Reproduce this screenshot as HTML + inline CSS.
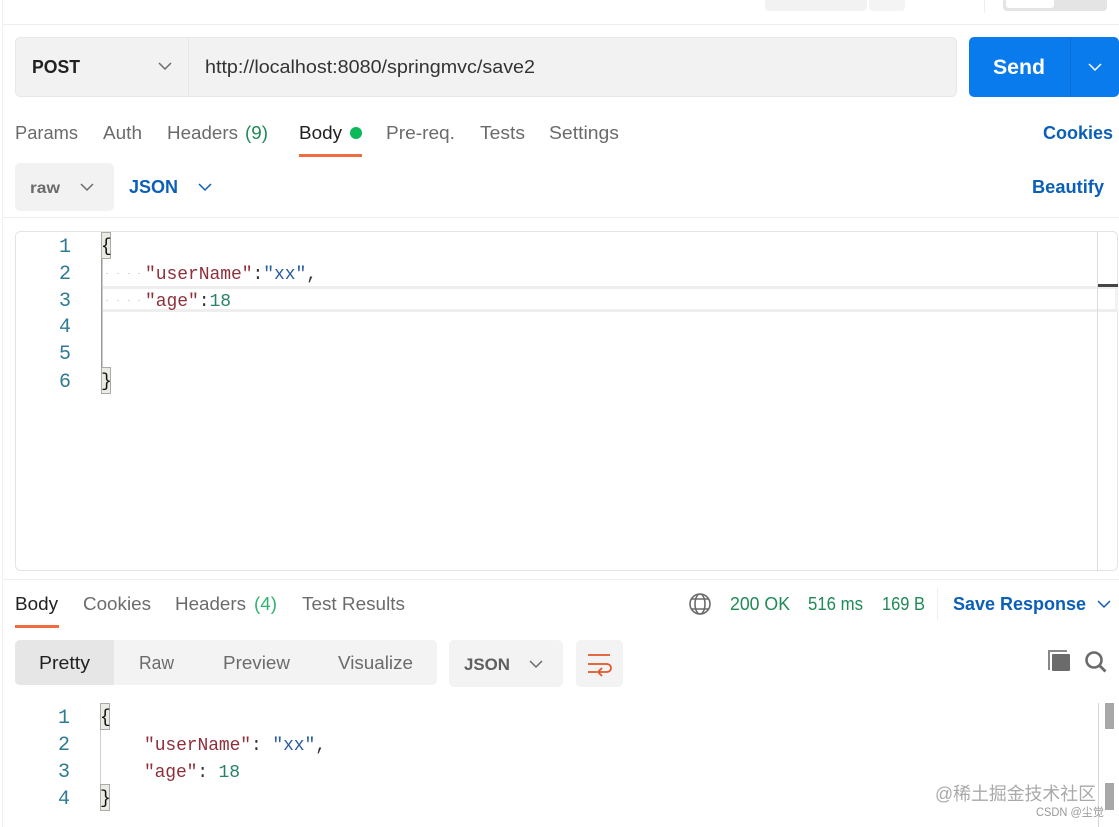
<!DOCTYPE html>
<html><head><meta charset="utf-8"><title>Postman</title>
<style>
html,body{margin:0;padding:0;background:#fff;width:1119px;height:827px;overflow:hidden}
svg{display:block}
text{font-family:"Liberation Sans","Noto Sans CJK SC",sans-serif;white-space:pre}
.t{font-size:18px;fill:#6b6b6b}
.d{font-size:18px;fill:#212121}
.b{font-size:18px;fill:#0b5fb8;font-weight:bold}
.g{font-size:18px;fill:#1f8a57}
.m{font-family:"Liberation Mono","DejaVu Sans Mono",monospace;font-size:18px}
.n{fill:#2f7a94;font-size:20px}.k{fill:#8f2f3a}.s{fill:#2a5b9e}.v{fill:#2a8068}.p{fill:#333}
.ch{fill:none;stroke-width:1.5}
</style></head><body>
<svg width="1119" height="827" viewBox="0 0 1119 827" xmlns="http://www.w3.org/2000/svg">
<rect width="1119" height="827" fill="#fff"/>
<!-- frame lines -->
<rect x="2" y="0" width="1" height="827" fill="#f2f2f2"/>
<rect x="3" y="24" width="1116" height="1" fill="#ededed"/>
<rect x="3" y="217" width="1116" height="1" fill="#ededed"/>
<rect x="3" y="579" width="1116" height="1" fill="#ededed"/>
<!-- top right -->
<rect x="765" y="-6" width="102" height="17" rx="4" fill="#f2f2f2"/>
<rect x="869" y="-6" width="36" height="17" rx="4" fill="#f4f4f4"/>
<rect x="984" y="0" width="1" height="13" fill="#eee"/>
<rect x="1003" y="-6" width="104" height="17" rx="4" fill="#e4e4e4"/>
<rect x="1006" y="-6" width="48" height="14" rx="3" fill="#fff"/>
<!-- URL bar -->
<rect x="15.5" y="37.5" width="941" height="59" rx="5" fill="#f2f2f2" stroke="#e8e8e8"/>
<rect x="188" y="38" width="1" height="58" fill="#e8e8e8"/>
<text x="32" y="73" textLength="48" lengthAdjust="spacingAndGlyphs" style="font-size:18px;font-weight:bold;fill:#212121">POST</text>
<path class="ch" stroke="#6b6b6b" d="M159 63l6 6 6-6"/>
<text x="205" y="73" textLength="330" lengthAdjust="spacingAndGlyphs" style="font-size:18px;fill:#333">http://localhost:8080/springmvc/save2</text>
<!-- Send -->
<rect x="969" y="37" width="150" height="60" rx="5" fill="#097bed"/>
<rect x="1070" y="37" width="1" height="60" fill="#0870d8"/>
<text x="993" y="74" textLength="52" lengthAdjust="spacingAndGlyphs" style="font-size:21px;font-weight:bold;fill:#fff">Send</text>
<path class="ch" stroke="#fff" d="M1089 64l6 6 6-6"/>
<!-- tabs -->
<text class="t" x="15" y="139" textLength="63" lengthAdjust="spacingAndGlyphs">Params</text>
<text class="t" x="103" y="139" textLength="39" lengthAdjust="spacingAndGlyphs">Auth</text>
<text class="t" x="167" y="139" textLength="71" lengthAdjust="spacingAndGlyphs">Headers</text>
<text class="g" x="245" y="139" textLength="23" lengthAdjust="spacingAndGlyphs">(9)</text>
<text class="d" x="299" y="139" textLength="43" lengthAdjust="spacingAndGlyphs">Body</text>
<circle cx="356" cy="133" r="6" fill="#0cb95a"/>
<rect x="299" y="154" width="63" height="3" fill="#ef6c3e"/>
<text class="t" x="386" y="139" textLength="69" lengthAdjust="spacingAndGlyphs">Pre-req.</text>
<text class="t" x="480" y="139" textLength="45" lengthAdjust="spacingAndGlyphs">Tests</text>
<text class="t" x="549" y="139" textLength="70" lengthAdjust="spacingAndGlyphs">Settings</text>
<text class="b" x="1043" y="139" textLength="70" lengthAdjust="spacingAndGlyphs">Cookies</text>
<!-- raw json -->
<rect x="15" y="163" width="99" height="48" rx="5" fill="#f2f2f2"/>
<text x="30" y="193" textLength="30" lengthAdjust="spacingAndGlyphs" style="font-size:16px;font-weight:bold;fill:#6b6b6b">raw</text>
<path class="ch" stroke="#6b6b6b" d="M81 184l6 6 6-6"/>
<text class="b" x="129" y="193" textLength="49" lengthAdjust="spacingAndGlyphs">JSON</text>
<path class="ch" stroke="#0b5fb8" d="M199 184l6 6 6-6"/>
<text class="b" x="1032" y="193" textLength="72" lengthAdjust="spacingAndGlyphs">Beautify</text>
<!-- request editor -->
<rect x="15.5" y="231.5" width="1102" height="339" rx="5" fill="#fff" stroke="#e4e4e4"/>
<rect x="103" y="286" width="1015" height="3" fill="#eeeeee"/>
<rect x="103" y="309" width="1015" height="3" fill="#eeeeee"/>
<rect x="1115" y="289" width="3" height="20" fill="#f2f2f2"/>
<rect x="1097" y="232" width="1" height="339" fill="#dcdcdc"/>
<rect x="1098" y="284" width="20" height="3" fill="#444"/>
<text class="m n" x="59" y="252">1</text>
<text class="m n" x="59" y="279">2</text>
<text class="m n" x="59" y="306">3</text>
<text class="m n" x="59" y="332">4</text>
<text class="m n" x="59" y="359">5</text>
<text class="m n" x="59" y="387">6</text>
<rect x="101.5" y="232.5" width="9" height="26" fill="#ebebe4" stroke="#aaa"/>
<rect x="101.5" y="367.5" width="9" height="26" fill="#ebebe4" stroke="#aaa"/>
<rect x="101" y="259" width="1.5" height="108" fill="#9a9a9a"/>
<text class="m" x="101" y="251" style="fill:#111;font-size:18px">{</text>
<text class="m" x="101" y="386" style="fill:#111;font-size:18px">}</text>
<g fill="#d8d8d8">
<rect x="106" y="273" width="2" height="1"/><rect x="117" y="273" width="2" height="1"/><rect x="128" y="273" width="2" height="1"/><rect x="138" y="273" width="2" height="1"/>
<rect x="106" y="300" width="2" height="1"/><rect x="117" y="300" width="2" height="1"/><rect x="128" y="300" width="2" height="1"/><rect x="138" y="300" width="2" height="1"/>
</g>
<text class="m" x="145" y="279" textLength="172"><tspan class="k">"userName"</tspan><tspan class="p">:</tspan><tspan class="s">"xx"</tspan><tspan class="p">,</tspan></text>
<text class="m" x="145" y="306" textLength="86"><tspan class="k">"age"</tspan><tspan class="p">:</tspan><tspan class="v">18</tspan></text>
<!-- response tabs -->
<text class="d" x="15" y="610" textLength="43" lengthAdjust="spacingAndGlyphs">Body</text>
<rect x="15" y="625" width="44" height="3" fill="#ef6c3e"/>
<text class="t" x="83" y="610" textLength="68" lengthAdjust="spacingAndGlyphs">Cookies</text>
<text class="t" x="175" y="610" textLength="71" lengthAdjust="spacingAndGlyphs">Headers</text>
<text x="254" y="610" textLength="23" lengthAdjust="spacingAndGlyphs" style="font-size:18px;fill:#2fb36f">(4)</text>
<text class="t" x="302" y="610" textLength="103" lengthAdjust="spacingAndGlyphs">Test Results</text>
<!-- status -->
<g fill="none" stroke="#6b6b6b" stroke-width="1.6">
<circle cx="700" cy="604" r="10"/>
<ellipse cx="700" cy="604" rx="5" ry="10"/>
<path d="M691.5 599h17M691.5 609h17"/>
</g>
<text class="g" x="730" y="610" textLength="60" lengthAdjust="spacingAndGlyphs">200 OK</text>
<text class="g" x="808" y="610" textLength="55" lengthAdjust="spacingAndGlyphs">516 ms</text>
<text class="g" x="882" y="610" textLength="43" lengthAdjust="spacingAndGlyphs">169 B</text>
<rect x="937" y="588" width="1" height="32" fill="#efefef"/>
<text class="b" x="953" y="610" textLength="133" lengthAdjust="spacingAndGlyphs">Save Response</text>
<path class="ch" stroke="#0b5fb8" d="M1098 601l6 6 6-6"/>
<!-- view bar -->
<rect x="15" y="640" width="422" height="45" rx="5" fill="#f3f3f3"/>
<path d="M20 640h94v45h-94a5 5 0 0 1-5-5v-35a5 5 0 0 1 5-5z" fill="#e6e6e6"/>
<text class="d" x="39" y="669" textLength="51" lengthAdjust="spacingAndGlyphs">Pretty</text>
<text class="t" x="139" y="669" textLength="35" lengthAdjust="spacingAndGlyphs">Raw</text>
<text class="t" x="223" y="669" textLength="67" lengthAdjust="spacingAndGlyphs">Preview</text>
<text class="t" x="338" y="669" textLength="75" lengthAdjust="spacingAndGlyphs">Visualize</text>
<rect x="449" y="640" width="114" height="47" rx="5" fill="#f3f3f3"/>
<text x="464" y="670" textLength="46" lengthAdjust="spacingAndGlyphs" style="font-size:17px;font-weight:bold;fill:#5f5f5f">JSON</text>
<path class="ch" stroke="#6b6b6b" d="M530 661l6 6 6-6"/>
<rect x="576" y="640" width="47" height="47" rx="5" fill="#f3f3f3"/>
<path fill="none" stroke="#e0562a" stroke-width="1.8" d="M588 655h22M588 664h19a4 4 0 0 1 0 8h-8M602 668l-4 4 4 4M588 672h9"/>
<!-- copy/search -->
<path d="M1049 670v-19h18" fill="none" stroke="#888" stroke-width="2"/>
<rect x="1052" y="654" width="18" height="17" rx="1" fill="#6b6b6b"/>
<circle cx="1094" cy="660" r="7.5" fill="none" stroke="#6b6b6b" stroke-width="2.6"/>
<path d="M1099.5 665.5l6 6" stroke="#6b6b6b" stroke-width="2.8" fill="none"/>
<!-- response code -->
<text class="m n" x="58" y="723">1</text>
<text class="m n" x="58" y="750">2</text>
<text class="m n" x="58" y="777">3</text>
<text class="m n" x="58" y="804">4</text>
<rect x="100.5" y="703.5" width="9" height="26" fill="#ebebe4" stroke="#aaa"/>
<rect x="100.5" y="784.5" width="9" height="26" fill="#ebebe4" stroke="#aaa"/>
<rect x="100" y="730" width="1" height="54" fill="#cfcfcf"/>
<text class="m" x="100" y="722" style="fill:#111;font-size:18px">{</text>
<text class="m" x="100" y="803" style="fill:#111;font-size:18px">}</text>
<text class="m" x="144" y="750" textLength="182"><tspan class="k">"userName"</tspan><tspan class="p">: </tspan><tspan class="s">"xx"</tspan><tspan class="p">,</tspan></text>
<text class="m" x="144" y="777" textLength="96"><tspan class="k">"age"</tspan><tspan class="p">: </tspan><tspan class="v">18</tspan></text>
<rect x="1098" y="703" width="1" height="124" fill="#d6d6d6"/>
<rect x="1105" y="703" width="9" height="26" fill="#a8a8a8"/>
<rect x="1105" y="783" width="9" height="27" fill="#a8a8a8"/>
<!-- watermarks -->
<text x="935" y="800" textLength="161" lengthAdjust="spacingAndGlyphs" style="font-size:18px;fill:#a9a9a9">@稀土掘金技术社区</text>
<text x="1036" y="816" textLength="68" lengthAdjust="spacingAndGlyphs" style="font-size:11.5px;fill:#9a9a9a">CSDN @尘觉</text>
</svg>
</body></html>
